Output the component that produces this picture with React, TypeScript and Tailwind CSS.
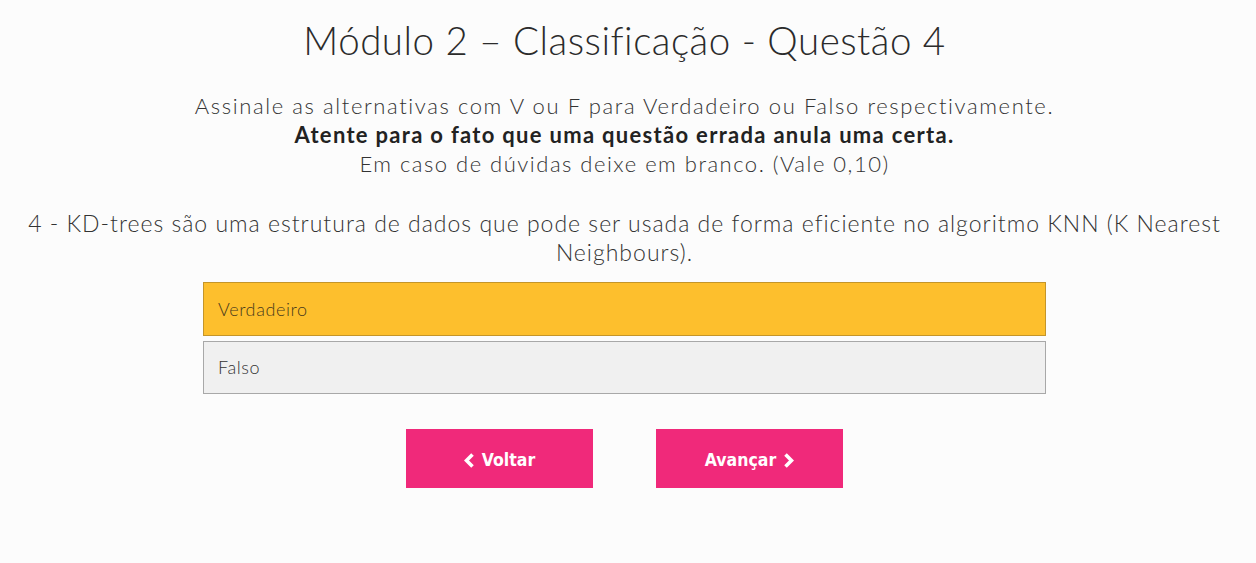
function Chevron({ dir }: { dir: 'left' | 'right' }) {
  return (
    <svg width="11" height="15" viewBox="0 0 11 15" className="shrink-0">
      <polyline
        points={dir === 'left' ? '8.5,1.5 2.5,7.5 8.5,13.5' : '2.5,1.5 8.5,7.5 2.5,13.5'}
        fill="none"
        stroke="white"
        strokeWidth="3.6"
        strokeLinecap="butt"
        strokeLinejoin="miter"
      />
    </svg>
  )
}

export default function App() {
  return (
    <div className="min-h-[563px] bg-[#fcfcfc] text-[#333] font-['Lato',sans-serif] text-center pr-[7px]">
      <div className="pt-[16px]">
        <h1 className="text-[38.5px] leading-[48px] font-light tracking-[0.5px] text-[#2b2b2b]">
          Módulo 2 – Classificação - Questão 4
        </h1>

        <div className="mt-[27px] text-[22px] leading-[29px] font-light text-[#333]">
          <p className="tracking-[1.6px]">Assinale as alternativas com V ou F para Verdadeiro ou Falso respectivamente.</p>
          <p className="font-bold tracking-[1.3px] text-[#222]">Atente para o fato que uma questão errada anula uma certa.</p>
          <p className="tracking-[1.5px]">Em caso de dúvidas deixe em branco. (Vale 0,10)</p>
        </div>

        <p className="mt-[31px] px-[20px] text-[23px] leading-[29px] font-light tracking-[1px] text-[#333]">
          4 - KD-trees são uma estrutura de dados que pode ser usada de forma eficiente no algoritmo KNN (K Nearest Neighbours).
        </p>

        <div className="mx-auto mt-[15px] w-[843px] flex flex-col gap-[5px] text-left">
          <div className="h-[54px] flex items-center px-[14px] bg-[#fdbf2d] border border-[#c4952a] text-[18px] font-light tracking-[0.6px] text-[#4a3b1c]">
            Verdadeiro
          </div>
          <div className="h-[53px] flex items-center px-[14px] bg-[#f0f0f0] border border-[#a8a8a8] text-[18px] font-light tracking-[0.6px] text-[#333]">
            Falso
          </div>
        </div>

        <div className="mt-[35px] flex justify-center gap-[63px] font-['DejaVu_Sans_Condensed','DejaVu_Sans',sans-serif]">
          <button className="w-[187px] h-[59px] pt-[3px] bg-[#f0297a] text-white text-[17.5px] font-bold flex items-center justify-center gap-[7px]">
            <Chevron dir="left" />
            Voltar
          </button>
          <button className="w-[187px] h-[59px] pt-[3px] bg-[#f0297a] text-white text-[17.5px] font-bold flex items-center justify-center gap-[7px]">
            Avançar
            <Chevron dir="right" />
          </button>
        </div>
      </div>
    </div>
  )
}
